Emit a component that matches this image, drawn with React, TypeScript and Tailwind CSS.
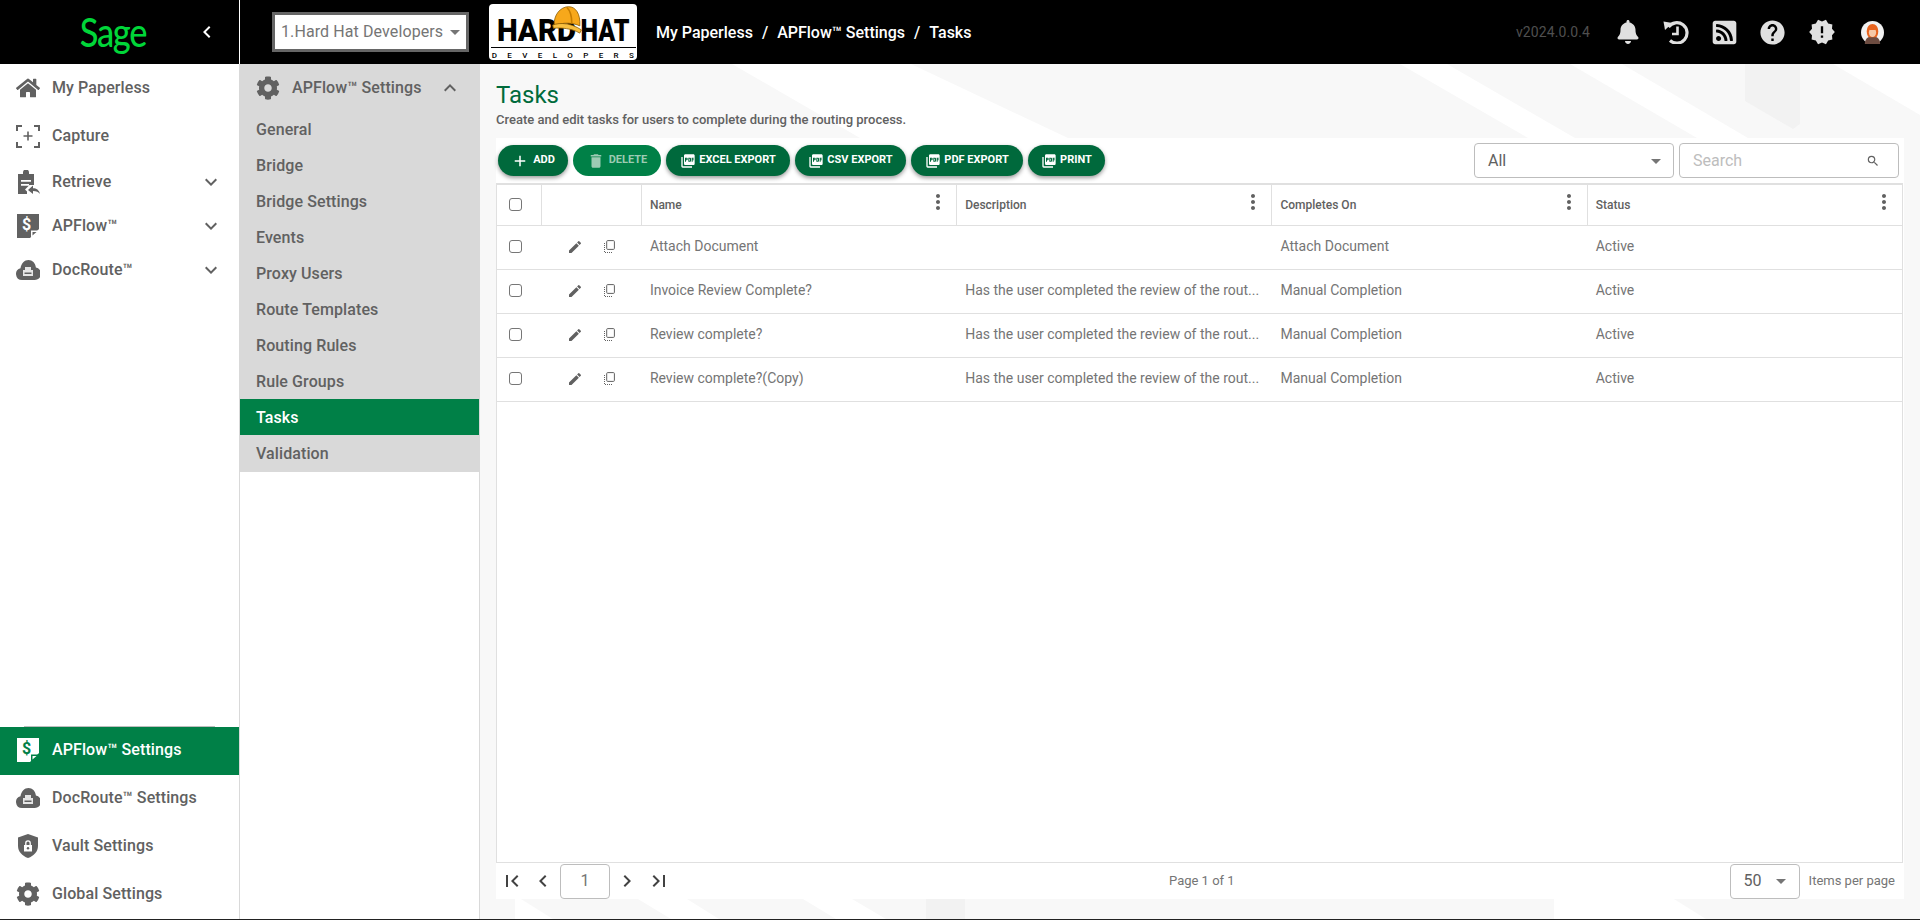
import {
  MdAdd,
  MdArrowDropDown,
  MdChevronLeft,
  MdChevronRight,
  MdDelete,
  MdEdit,
  MdExpandLess,
  MdExpandMore,
  MdFirstPage,
  MdHelp,
  MdKeyboardArrowLeft,
  MdLastPage,
  MdMoreVert,
  MdNewReleases,
  MdPictureAsPdf,
  MdSearch,
} from "react-icons/md";
import { FaBell, FaCog, FaHome, FaRssSquare } from "react-icons/fa";
import type { ReactNode } from "react";

const CaptureIcon = () => (
  <svg viewBox="0 0 24 24" className="h-6 w-6" fill="none" stroke="currentColor" strokeWidth="2">
    <path d="M1 7V2h5M18 2h5v5M23 18v5h-5M6 23H1v-5" />
    <path d="M12 7.500v9M7.500 12h9" strokeWidth="1.600" />
  </svg>
);

const RetrieveIcon = () => (
  <svg viewBox="0 0 24 24" className="h-6 w-6" fill="currentColor">
    <path d="M2 4h5V2.500a3 3 0 0 1 6 0V4h5v11h-4.500L9 19.500l2 2V24H2z" />
    <path d="M5 10h10v1.800H5zM5 14h8v1.800H5z" fill="#fff" />
    <path d="M12 20l5-4.500v2.800c3.500 0 6 1.700 7 5.700-1.500-2-3.500-3-7-3V24z" />
  </svg>
);

const DollarDocIcon = ({ mark = "#fff" }: { mark?: string }) => (
  <svg viewBox="0 0 24 24" className="h-6 w-6">
    <path d="M1 0h22v15l-9 9H1z" fill="currentColor" />
    <text x="6" y="16" fontSize="16" fontWeight="700" fontFamily="Roboto, sans-serif" fill={mark}>
      $
    </text>
    <path d="M15 23.500v-7h8z" fill={mark} />
    <path d="M16.500 21.500v-3.500h4z" fill="currentColor" />
  </svg>
);

const CloudIcon = () => (
  <svg viewBox="0 0 24 24" className="h-6 w-6" fill="currentColor">
    <path d="M6 22a6 6 0 0 1-1.500-11.800C5.200 5.500 8.500 2 12.500 2c3.800 0 7 3 7.400 7.500A6.300 6.300 0 0 1 18.500 22z" />
    <path d="M7 12h10v6H7z" fill="#e5e5e5" />
    <path d="M9 9h6v3H9z" fill="#e5e5e5" />
    <path d="M8.500 14.500h7v1.500h-7z" fill="currentColor" />
  </svg>
);

const ShieldLockIcon = () => (
  <svg viewBox="0 0 24 24" className="h-6 w-6">
    <path d="M12 0l10 3.500v8.500c0 5.500-4.200 10-10 12C6.200 22 2 17.500 2 12V3.500z" fill="currentColor" />
    <path d="M8 11h8v6.500H8z" fill="#fff" />
    <path d="M9.800 11V9a2.200 2.200 0 0 1 4.400 0v2" fill="none" stroke="#fff" strokeWidth="1.300" />
    <circle cx="12" cy="14.200" r="1.200" fill="currentColor" />
  </svg>
);

const HistoryIcon = () => (
  <svg viewBox="0 0 26 24" className="h-6 w-[26px]" fill="none" stroke="currentColor" strokeWidth="3.200">
    <path d="M5.500 7A10.200 10.200 0 1 1 7 20.500" />
    <path d="M0.500 1.500l9 1.500-7.500 7z" fill="currentColor" stroke="none" />
    <path d="M14.500 6.500V14H9" strokeWidth="2.600" />
  </svg>
);

const CopyIcon = () => (
  <svg viewBox="0 0 11 13" className="h-[13px] w-[11px]" fill="none" stroke="currentColor">
    <rect x="2.700" y="0.600" width="7.700" height="8.800" rx="1" />
    <path d="M0.500 3v9.500h8" strokeDasharray="1 1" />
  </svg>
);

const Avatar = () => (
  <svg viewBox="0 0 24 24" className="h-[23px] w-[23px]">
    <circle cx="12" cy="12" r="12" fill="#f1f1f1" />
    <path d="M4 24c0-5 3-8 8-8s8 3 8 8z" fill="#6d4c41" />
    <path d="M6 11c0-5 2.500-8 6-8s6 3 6 8c0 3-1 5-2 6H8c-1-1-2-3-2-6z" fill="#e8641f" />
    <ellipse cx="12" cy="12" rx="3.800" ry="4.800" fill="#f6c9a8" />
    <path d="M8 9c1.500-2.500 6.500-2.500 8 0-2 .5-6 .5-8 0z" fill="#e8641f" />
  </svg>
);

const SideRow = ({
  icon,
  label,
  h = "h-11",
  chevron,
  active,
  lift,
}: {
  icon: ReactNode;
  label: string;
  h?: string;
  chevron?: boolean;
  active?: boolean;
  lift?: boolean;
}) => (
  <div
    className={`flex items-center pr-4 pl-4 ${h} ${lift ? "pb-[2px]" : ""} ${
      active ? "bg-[#008047] text-white" : "text-[#616161]"
    }`}
  >
    <span className="mr-3 flex w-6 shrink-0 justify-center">{icon}</span>
    <span className="flex-1 text-[16px] font-medium tracking-[0.1px]">{label}</span>
    {chevron && <MdExpandMore className="h-6 w-6" />}
  </div>
);

const settingsLinks = [
  "General",
  "Bridge",
  "Bridge Settings",
  "Events",
  "Proxy Users",
  "Route Templates",
  "Routing Rules",
  "Rule Groups",
  "Tasks",
  "Validation",
];

const toolbar = [
  { label: "EXCEL EXPORT", w: "w-[124px]" },
  { label: "CSV EXPORT", w: "w-[111px]" },
  { label: "PDF EXPORT", w: "w-[112px]" },
  { label: "PRINT", w: "w-[77px]" },
];

const desc = "Has the user completed the review of the rout...";

const rows = [
  { name: "Attach Document", description: "", completes: "Attach Document" },
  { name: "Invoice Review Complete?", description: desc, completes: "Manual Completion" },
  { name: "Review complete?", description: desc, completes: "Manual Completion" },
  { name: "Review complete?(Copy)", description: desc, completes: "Manual Completion" },
];

const Checkbox = () => <span className="block h-[13px] w-[13px] rounded-[3px] border border-[#767676] bg-white" />;

const HeadCell = ({ label }: { label: string }) => (
  <div className="flex w-[315.500px] items-center justify-between border-l border-[#e0e0e0] pr-[6px] pl-2">
    <span className="text-[12px] font-medium text-[#616161]">{label}</span>
    <MdMoreVert className="h-6 w-6 -translate-y-[3px] text-[#616161]" />
  </div>
);

export default function App() {
  return (
    <div
      className="flex h-[920px] w-[1920px] flex-col overflow-hidden bg-white text-[#616161]"
      style={{ fontFamily: "Roboto, 'Noto Sans', sans-serif" }}
    >
      <header className="flex h-16 shrink-0 items-center bg-black">
        <div className="flex h-full w-[240px] shrink-0 items-center border-r border-white">
          <span
            className="ml-[75px] w-[68px] origin-center scale-x-[0.86] text-center text-[40px] leading-none font-medium tracking-[-1.5px] text-[#00d639]"
            style={{ fontFamily: "Lato, sans-serif" }}
          >
            Sage
          </span>
          <MdKeyboardArrowLeft className="ml-[52px] h-6 w-6 text-white" />
        </div>
        <div className="ml-8 flex h-10 w-[197px] items-center border-[3px] border-[#666666] bg-white pl-[6px] text-[16px] text-[#757575]">
          <span className="flex-1 tracking-[0.1px] whitespace-nowrap">1.Hard Hat Developers</span>
          <MdArrowDropDown className="mr-px h-6 w-6 shrink-0 text-[#757575]" />
        </div>
        <div className="relative ml-5 flex h-14 w-[148px] flex-col items-center rounded-[4px] bg-white pt-[10px] text-black">
          <div className="flex h-[32px] w-[133px] items-center justify-between">
            <span className="flex w-[79px] scale-x-[0.92] justify-center text-[32px] leading-none font-black">HARD</span>
            <span className="flex w-[50px] scale-x-[0.78] justify-center text-[32px] leading-none font-black">HAT</span>
          </div>
          <div className="mt-[1px] h-px w-[145px] bg-black" />
          <div className="mt-[4px] pl-[10px] text-[8px] leading-none font-medium tracking-[10.400px] whitespace-nowrap">
            DEVELOPERS
          </div>
          <svg viewBox="0 0 40 36" className="absolute top-[1px] left-[62px] h-[29px] w-[32px]">
            <path d="M4 26C3 12 12 2 22 2c9 0 15 9 14 24C28 22 14 21 4 26z" fill="#f7a81b" stroke="#8a5a00" strokeWidth="1" />
            <path d="M2 25c10-4 24-2 36 6l-2 4C26 29 12 28 3 29z" fill="#f9c040" stroke="#8a5a00" strokeWidth="1" />
            <path d="M20 3c5 5 6 13 6 20" fill="none" stroke="#c67c00" strokeWidth="2" />
          </svg>
        </div>
        <nav className="ml-[19px] flex translate-y-px gap-[9px] text-[16px] font-medium whitespace-nowrap text-white">
          <span>My Paperless</span>
          <span>/</span>
          <span>APFlow™ Settings</span>
          <span>/</span>
          <span>Tasks</span>
        </nav>
        <div className="ml-auto flex items-center text-[#e0e0e0]">
          <span className="mr-[14px] text-[14px] tracking-[0.1px] text-[#4f4f4f]">v2024.0.0.4</span>
          <span className="flex w-12 justify-center">
            <FaBell className="h-6 w-6" />
          </span>
          <span className="flex w-12 justify-center">
            <HistoryIcon />
          </span>
          <span className="flex w-12 justify-center">
            <FaRssSquare className="h-[27px] w-[27px]" />
          </span>
          <span className="flex w-12 justify-center">
            <MdHelp className="h-[29px] w-[29px]" />
          </span>
          <span className="flex w-[51px] justify-center">
            <MdNewReleases className="h-[28px] w-[28px]" />
          </span>
          <span className="mr-[23px] flex w-[50px] justify-center">
            <Avatar />
          </span>
        </div>
      </header>

      <div className="flex min-h-0 flex-1">
        <aside className="flex w-[240px] shrink-0 flex-col border-r border-[#d9d9d9] bg-white">
          <SideRow icon={<FaHome className="h-6 w-6" />} label="My Paperless" h="h-[47px]" />
          <SideRow icon={<CaptureIcon />} label="Capture" h="h-[49px]" />
          <SideRow icon={<RetrieveIcon />} label="Retrieve" chevron />
          <SideRow icon={<DollarDocIcon />} label="APFlow™" chevron />
          <SideRow icon={<CloudIcon />} label="DocRoute™" chevron />
          <div className="mx-6 mt-auto h-px bg-[#bdbdbd]" />
          <SideRow icon={<DollarDocIcon mark="#008047" />} label="APFlow™ Settings" h="h-12" active lift />
          <SideRow icon={<CloudIcon />} label="DocRoute™ Settings" h="h-12" lift />
          <SideRow icon={<ShieldLockIcon />} label="Vault Settings" h="h-12" lift />
          <SideRow icon={<FaCog className="h-6 w-6" />} label="Global Settings" h="h-12" lift />
        </aside>

        <aside className="w-[240px] shrink-0 border-r border-[#d9d9d9] bg-white">
          <div className="bg-[#d9d9d9] pb-px">
            <div className="flex h-[47px] items-center pr-[17px] pl-4 text-[#616161]">
              <FaCog className="h-6 w-6" />
              <span className="ml-3 flex-1 text-[16px] font-medium tracking-[0.1px]">APFlow™ Settings</span>
              <MdExpandLess className="h-6 w-6" />
            </div>
            {settingsLinks.map((link) => (
              <div
                key={link}
                className={`flex h-9 items-center pt-[2px] pl-4 text-[16px] font-medium tracking-[0.1px] ${
                  link === "Tasks" ? "bg-[#008047] text-white" : "text-[#616161]"
                }`}
              >
                {link}
              </div>
            ))}
          </div>
        </aside>

        <main className="relative min-w-0 flex-1 bg-white px-4">
          <svg className="absolute inset-0 h-full w-full" viewBox="0 0 1440 855" preserveAspectRatio="none">
            <path d="M0 0h1440v855H0z" fill="#f8f8f8" />
            <path d="M252 0h179l157 74H380z" fill="#ffffff" />
            <path d="M920 0h47l128 74h-47z" fill="#ffffff" />
            <path d="M1090 0h52l126 74h-51z" fill="#ffffff" />
            <path d="M1353 0h87v51z" fill="#ffffff" />
            <path d="M1265 0h55v60l-7 5-48-28z" fill="#f2f2f2" />
            <path d="M158 835h49l32 20h-48zM323 835h49l34 20h-50z" fill="#ffffff" />
            <path d="M35 835h6l32 20H35z" fill="#ffffff" />
            <path d="M1074 835h120l32 20H1074z" fill="#ffffff" />
            <path d="M446 835h39v20h-39z" fill="#f2f2f2" />
          </svg>
          <div className="relative">
            <h1 className="pt-[17px] text-[24px] leading-[28px] font-normal text-[#006b3c]">Tasks</h1>
            <p className="mt-[4px] text-[13px] leading-[14px] font-medium text-[#616161]">
              Create and edit tasks for users to complete during the routing process.
            </p>
            <section className="mt-[11px] flex h-[761px] flex-col bg-white">
              <div className="flex h-[45px] shrink-0 items-center pl-[2px]">
                <button className="flex h-[31px] w-[70px] items-center justify-center gap-[4px] rounded-full bg-[#00693c] text-[11px] font-bold text-white shadow-[0_2px_4px_rgba(0,0,0,0.4)]">
                  <MdAdd className="h-[18px] w-[18px]" />
                  ADD
                </button>
                <button className="ml-[5px] flex h-[31px] w-[88px] items-center justify-center gap-[4px] rounded-full bg-[#008047] text-[11px] font-bold text-[#9ccbb3]">
                  <MdDelete className="h-[18px] w-[18px]" />
                  DELETE
                </button>
                {toolbar.map((b) => (
                  <button
                    key={b.label}
                    className={`ml-[5px] flex h-[31px] items-center justify-center gap-[3px] rounded-full bg-[#00693c] text-[11px] font-bold text-white shadow-[0_2px_4px_rgba(0,0,0,0.4)] ${b.w}`}
                  >
                    <MdPictureAsPdf className="h-4 w-4" />
                    {b.label}
                  </button>
                ))}
                <div className="ml-auto flex h-[35px] w-[200px] items-center justify-between rounded-[4px] border border-[#bdbdbd] pr-[5px] pl-[13px] text-[16px] text-[#616161]">
                  All
                  <MdArrowDropDown className="h-6 w-6 text-[#757575]" />
                </div>
                <div className="mr-[5px] ml-[5px] flex h-[35px] w-[220px] items-center justify-between rounded-[4px] border border-[#bdbdbd] pr-[18px] pl-[13px] text-[16px] text-[#bdbdbd]">
                  Search
                  <MdSearch className="h-[14px] w-[14px] text-[#616161]" />
                </div>
              </div>
              <div className="mr-px flex min-h-0 flex-1 flex-col border-x border-t-2 border-b border-[#e0e0e0]">
                <div className="flex h-[41px] shrink-0 border-b border-[#e0e0e0]">
                  <div className="flex w-[44px] items-center pb-[2px] pl-[12px]">
                    <Checkbox />
                  </div>
                  <div className="w-[100px] border-l border-[#e0e0e0]" />
                  <HeadCell label="Name" />
                  <HeadCell label="Description" />
                  <HeadCell label="Completes On" />
                  <HeadCell label="Status" />
                </div>
                {rows.map((r) => (
                  <div
                    key={r.name}
                    className="flex h-11 shrink-0 items-center border-b border-[#e0e0e0] pb-[2px] text-[14px] text-[#757575]"
                  >
                    <div className="flex w-[44px] pl-[12px]">
                      <Checkbox />
                    </div>
                    <div className="flex w-[100px] items-center gap-[21px] pl-[26px] text-[#616161]">
                      <MdEdit className="h-4 w-4" />
                      <CopyIcon />
                    </div>
                    <div className="w-[315.500px] px-[9px] whitespace-nowrap">{r.name}</div>
                    <div className="w-[315.500px] pl-[9px] whitespace-nowrap">{r.description}</div>
                    <div className="w-[315.500px] px-[9px] whitespace-nowrap">{r.completes}</div>
                    <div className="w-[315.500px] px-[9px] whitespace-nowrap">Active</div>
                  </div>
                ))}
              </div>
              <div className="flex h-[36px] shrink-0 items-center text-[#424242]">
                <MdFirstPage className="ml-[4px] h-6 w-6" />
                <MdChevronLeft className="ml-[7px] h-6 w-6" />
                <div className="ml-[5px] flex h-[35px] w-[50px] items-center justify-center rounded-[4px] border border-[#bdbdbd] text-[16px] text-[#757575]">
                  1
                </div>
                <MdChevronRight className="ml-[5px] h-6 w-6" />
                <MdLastPage className="ml-[8px] h-6 w-6" />
                <span className="ml-[498px] text-[13px] text-[#757575]">Page 1 of 1</span>
                <div className="ml-auto flex h-[35px] w-[70px] items-center justify-between rounded-[4px] border border-[#bdbdbd] pr-[6px] pl-[13px] text-[16px] text-[#616161]">
                  50
                  <MdArrowDropDown className="h-6 w-6 text-[#757575]" />
                </div>
                <span className="mr-[9px] ml-[9px] text-[13px] text-[#757575]">Items per page</span>
              </div>
            </section>
          </div>
        </main>
      </div>
      <div className="h-px shrink-0 bg-[#222222]" />
    </div>
  );
}
